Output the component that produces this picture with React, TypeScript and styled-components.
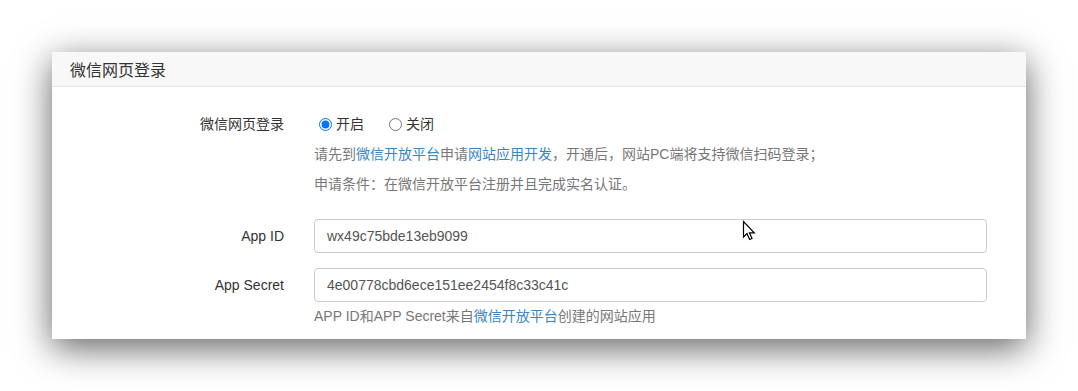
import React from "react";
import styled, { createGlobalStyle } from "styled-components";

const GlobalStyle = createGlobalStyle`
  html, body {
    margin: 0;
    padding: 0;
    background: #ffffff;
  }
  body {
    font-family: "Liberation Sans", "Noto Sans CJK SC", sans-serif;
    font-size: 14px;
    color: #333;
  }
  * { box-sizing: border-box; }
`;

const Page = styled.div`
  padding: 52px;
  width: 1078px;
`;

const Card = styled.section`
  position: relative;
  background: #fff;
  height: 287px;
  box-shadow: 0 9px 34px rgba(0, 0, 0, 0.62);
  overflow: hidden;
`;

const CardHeader = styled.header`
  height: 35px;
  background: #f8f8f8;
  border-bottom: 1px solid #e3e3e3;
  padding-left: 18px;
  display: flex;
  align-items: center;
  font-size: 16px;
  color: #333;
`;

const CardBody = styled.div`
  padding: 27px 39px 0 0;
`;

const FormRow = styled.div<{ $gap?: number; $center?: boolean }>`
  display: grid;
  grid-template-columns: 232px 1fr;
  column-gap: 30px;
  align-items: ${(p) => (p.$center ? "center" : "start")};
  margin-top: ${(p) => p.$gap ?? 0}px;
`;

const Label = styled.label<{ $tall?: boolean }>`
  text-align: right;
  line-height: ${(p) => (p.$tall ? "34px" : "20px")};
  font-size: 14px;
  color: #333;
`;

const Controls = styled.div`
  display: flex;
  flex-direction: column;
`;

const RadioGroup = styled.div`
  display: flex;
  align-items: center;
  height: 20px;
  gap: 20px;
`;

const RadioLabel = styled.label`
  display: inline-flex;
  align-items: center;
  line-height: 20px;
  color: #333;
  font-size: 14px;
`;

const Radio = styled.input`
  width: 13px;
  height: 13px;
  margin: 0 4px 0 5px;
`;

const Help = styled.p`
  margin: 10px 0 0;
  line-height: 20px;
  font-size: 14px;
  color: #777;
`;

const Link = styled.a`
  color: #3a85c6;
  text-decoration: none;
`;

const TextInput = styled.input`
  height: 34px;
  width: 100%;
  border: 1px solid #ccc;
  border-radius: 4px;
  padding: 0 12px;
  font-family: "Liberation Sans", "Noto Sans CJK SC", sans-serif;
  font-size: 14px;
  color: #555;
  background: #fff;
  outline: none;
`;

const InputHelp = styled(Help)`
  margin-top: 4px;
`;

const Cursor = styled.svg`
  position: absolute;
  left: 690px;
  top: 168px;
  width: 14px;
  height: 21px;
`;

export default function App() {
  return (
    <>
      <GlobalStyle />
      <Page>
        <Card>
          <CardHeader>微信网页登录</CardHeader>
          <CardBody>
            <FormRow>
              <Label>微信网页登录</Label>
              <Controls>
                <RadioGroup>
                  <RadioLabel>
                    <Radio type="radio" name="wx" defaultChecked />
                    开启
                  </RadioLabel>
                  <RadioLabel>
                    <Radio type="radio" name="wx" />
                    关闭
                  </RadioLabel>
                </RadioGroup>
                <Help>
                  请先到<Link>微信开放平台</Link>申请<Link>网站应用开发</Link>，开通后，网站PC端将支持微信扫码登录；
                </Help>
                <Help>申请条件：在微信开放平台注册并且完成实名认证。</Help>
              </Controls>
            </FormRow>
            <FormRow $gap={25} $center>
              <Label>App ID</Label>
              <TextInput defaultValue="wx49c75bde13eb9099" />
            </FormRow>
            <FormRow $gap={15}>
              <Label $tall>App Secret</Label>
              <Controls>
                <TextInput defaultValue="4e00778cbd6ece151ee2454f8c33c41c" />
                <InputHelp>
                  APP ID和APP Secret来自<Link>微信开放平台</Link>创建的网站应用
                </InputHelp>
              </Controls>
            </FormRow>
          </CardBody>
          <Cursor viewBox="0 0 14 21">
            <path
              d="M1.5 1.5 L1.5 17 L5 13.6 L7.6 19.5 L10 18.5 L7.5 12.8 L12.3 12.8 Z"
              fill="#fff"
              stroke="#000"
              strokeWidth="1.2"
              strokeLinejoin="miter"
            />
          </Cursor>
        </Card>
      </Page>
    </>
  );
}
